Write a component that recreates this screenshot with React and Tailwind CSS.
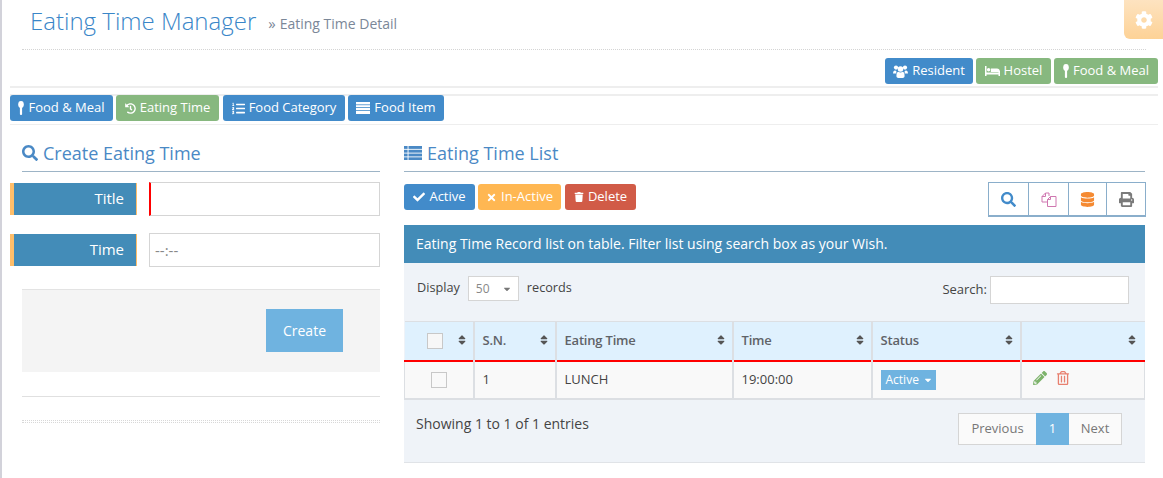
import { FaHistory, FaListOl, FaSearch, FaCheck, FaTimes, FaTrash, FaDatabase, FaPrint, FaPencilAlt, FaRegTrashAlt, FaCog, FaCaretDown, FaSort } from "react-icons/fa";

function Spoon() {
  return (
    <svg width="6" height="14" viewBox="0 0 6 14" fill="currentColor" className="shrink-0">
      <ellipse cx="3" cy="3.4" rx="2.8" ry="3.4" />
      <rect x="1.9" y="5" width="2.2" height="9" rx="1" />
    </svg>
  );
}

function Users() {
  return (
    <svg width="15" height="13" viewBox="0 0 15 13" fill="currentColor" className="shrink-0">
      <circle cx="3" cy="2.6" r="2.1" />
      <circle cx="12" cy="2.6" r="2.1" />
      <circle cx="7.5" cy="4" r="2.8" />
      <path d="M0 9c0-2.6.8-3.6 2-3.6.5 0 .9.3 1.4.5-.2.7-.1 1.6 0 2.6H0zM15 9c0-2.6-.8-3.6-2-3.6-.5 0-.9.3-1.4.5.2.7.1 1.6 0 2.6H15z" />
      <path d="M3.4 11c0-3 1-4.3 2-4.3.6.5 1.3.8 2.1.8s1.5-.3 2.1-.8c1 0 2 1.3 2 4.3 0 1.2-.8 2-2 2h-4.200c-1.200 0-2-.8-2-2z" />
    </svg>
  );
}

function Bed() {
  return (
    <svg width="15" height="10" viewBox="0 0 15 10" fill="currentColor" className="shrink-0">
      <rect x="0" y="0" width="1.500" height="10" />
      <rect x="13.500" y="5" width="1.500" height="5" />
      <rect x="0" y="6.500" width="15" height="2" />
      <circle cx="3.600" cy="3.800" r="1.700" />
      <path d="M5.800 2.500h6.200c1.500 0 3 1 3 3.500H5.800z" />
    </svg>
  );
}

function ListFour({ size = 18 }) {
  return (
    <svg width={size} height={size * 0.8} viewBox="0 0 20 16" fill="currentColor" className="shrink-0">
      {[0, 4.200, 8.400, 12.600].map((y) => (
        <g key={y}>
          <rect x="0" y={y} width="4" height="3.200" />
          <rect x="5" y={y} width="15" height="3.200" />
        </g>
      ))}
    </svg>
  );
}

function Stripes() {
  return (
    <svg width="14" height="12" viewBox="0 0 14 12" fill="currentColor" className="shrink-0">
      <rect width="14" height="2.400" />
      <rect y="3.200" width="14" height="2" />
      <rect y="6" width="14" height="2" />
      <rect y="8.800" width="14" height="3.200" />
    </svg>
  );
}

function Files() {
  return (
    <svg width="16" height="15" viewBox="0 0 16 15" fill="none" stroke="#cf77b0" strokeWidth="1" className="shrink-0">
      <path d="M4.500 1 1 4.500v5.500h5" />
      <path d="M4.500 1h3.500v3" />
      <path d="M4.500 1v3.500H1" />
      <path d="M9.500 4.500H15v10H6.500V7.500z" fill="white" />
      <path d="M9.500 4.500v3h-3" />
    </svg>
  );
}

function Btn({ color, icon, width, children }) {
  return (
    <span className={`flex h-[26px] items-center justify-center gap-[4px] rounded-[3px] text-[13px] text-white ${width} ${color}`}>
      {icon}
      {children}
    </span>
  );
}

function Field({ label, children }) {
  return (
    <div className="flex h-[34px] items-center">
      <div className="flex h-[32px] w-[127px] items-center justify-end border-l-4 border-r border-l-[#ffbe6a] border-r-[#ffbe6a] bg-[#438cb8] pb-[2px] pr-[12px] text-[15px] text-white">
        {label}
      </div>
      <div className="ml-[12px] flex-1">{children}</div>
    </div>
  );
}

function Th({ w, children }) {
  return (
    <th className={`h-[39px] border-r-2 border-[#dcdfe3] pl-[8px] pr-[5px] text-left text-[13px] font-semibold tracking-[-0.2px] text-[#5f6368] ${w}`}>
      <div className="flex items-center justify-between">
        <span>{children}</span>
        <FaSort className="mb-[2px] text-[12px] text-[#555]" />
      </div>
    </th>
  );
}

export default function App() {
  return (
    <div className="relative h-[478px] w-[1163px] overflow-hidden border-l-2 border-[#d2d2da] bg-white font-['Open_Sans',sans-serif]">
      <div className="absolute right-0 top-0 flex h-[39px] w-[39px] items-center justify-center rounded-bl-[6px] bg-gradient-to-b from-[#fde3c0] to-[#fdd296]">
        <FaCog className="text-[18px] text-white" />
      </div>

      <div className="ml-[20px] mr-[17px] flex h-[50px] items-center gap-[12px] border-b border-dotted border-[#d4d4d4] pb-[8px] pl-[8px]">
        <h1 className="text-[24px] font-light text-[#3a86c8]">Eating Time Manager</h1>
        <span className="mt-[6px] flex items-center gap-[4px] text-[14px] text-[#7b8798]">
          <span className="text-[15px] leading-none">»</span>
          Eating Time Detail
        </span>
      </div>

      <div className="ml-[8px] mr-[5px] flex h-[38px] items-start justify-end gap-[3px] border-b-2 border-[#eeeeee] pt-[8px]">
        <Btn color="bg-[#428bca]" width="w-[88px]" icon={<Users />}>Resident</Btn>
        <Btn color="bg-[#87b87f]" width="w-[75px]" icon={<Bed />}>Hostel</Btn>
        <Btn color="bg-[#87b87f]" width="w-[104px]" icon={<Spoon />}>Food &amp; Meal</Btn>
      </div>

      <div className="ml-[8px] mr-[5px] mt-[6px] flex h-[31px] gap-[3px] border-t-2 border-[#eeeeee] border-b border-b-[#eeeeee]">
        <div className="-mt-[1px] flex gap-[3px]">
          <Btn color="bg-[#428bca]" width="w-[103px]" icon={<Spoon />}>Food &amp; Meal</Btn>
          <Btn color="bg-[#87b87f]" width="w-[103px]" icon={<FaHistory className="text-[11px]" />}>Eating Time</Btn>
          <span className="flex gap-[3px] pl-[1px]">
            <Btn color="bg-[#428bca]" width="w-[122px]" icon={<FaListOl className="text-[13px]" />}>Food Category</Btn>
            <Btn color="bg-[#428bca]" width="w-[96px]" icon={<Stripes />}>Food Item</Btn>
          </span>
        </div>
      </div>

      <div className="flex">
        <div className="w-[378px] shrink-0">
          <h2 className="ml-[20px] flex h-[47px] items-center gap-[5px] border-b border-[#9db4c6] pt-[10px] text-[18px] text-[#4a89c5]">
            <FaSearch className="text-[16px]" />
            Create Eating Time
          </h2>
          <div className="ml-[8px] mt-[10px] flex flex-col gap-[17px]">
            <Field label="Title">
              <div className="h-[34px] border border-l-2 border-[#d5d5d5] border-l-[#ff0000] bg-white" />
            </Field>
            <Field label="Time">
              <div className="flex h-[34px] items-center border border-[#d5d5d5] bg-white pl-[5px] text-[15px] text-[#888]">
                --:--
              </div>
            </Field>
          </div>
          <div className="ml-[20px] mt-[22px] flex h-[83px] justify-end border-t border-[#e3e3e3] bg-[#f4f4f4] pr-[37px] pt-[19px]">
            <span className="flex h-[43px] w-[77px] items-center justify-center bg-[#6fb3e0] text-[14px] text-white">Create</span>
          </div>
          <div className="ml-[20px] mt-[24px] h-[24px] border-t border-[#e0e0e0]" />
          <div className="ml-[20px] h-[3px] border-y border-dotted border-[#d8d8d8]" />
        </div>

        <div className="ml-[24px] w-[741px] shrink-0">
          <h2 className="flex h-[47px] items-center gap-[5px] border-b border-[#9db4c6] pt-[10px] text-[18px] text-[#4a89c5]">
            <ListFour />
            Eating Time List
          </h2>
          <div className="mt-[12px] flex h-[35px] justify-between">
            <div className="flex">
              <Btn color="bg-[#428bca]" width="w-[71px] mr-[3px]" icon={<FaCheck className="text-[12px]" />}>Active</Btn>
              <Btn color="bg-[#ffb752]" width="w-[83px] mr-[4px]" icon={<FaTimes className="text-[11px]" />}>In-Active</Btn>
              <Btn color="bg-[#d15b47]" width="w-[71px]" icon={<FaTrash className="text-[10px]" />}>Delete</Btn>
            </div>
            <div className="-mr-[1px] -mt-[2px] flex h-[35px] border border-b-2 border-[#8aaecb]">
              <span className="flex w-[40px] items-center justify-center border-r border-[#8aaecb] text-[15px] text-[#428bca]"><FaSearch /></span>
              <span className="flex w-[40px] items-center justify-center border-r border-[#8aaecb]"><Files /></span>
              <span className="flex w-[38px] items-center justify-center border-r border-[#8aaecb] text-[15px] text-[#f58a32]"><FaDatabase /></span>
              <span className="flex w-[38px] items-center justify-center text-[15px] text-[#7a7a7a]"><FaPrint /></span>
            </div>
          </div>

          <div className="mt-[6px] flex h-[38px] items-center bg-[#438cb8] pb-[2px] pl-[12px] text-[14px] text-white">
            Eating Time Record list on table. Filter list using search box as your Wish.
          </div>

          <div className="h-[200px] border-b border-[#e0e3e7] bg-[#eff3f8]">
            <div className="flex h-[58px] items-start justify-between pl-[13px] pr-[16px] pt-[13px]">
              <div className="flex h-[25px] items-center text-[12.700px] text-[#444]">
                <span className="mb-[2px]">Display</span>
                <span className="ml-[8px] mr-[8px] flex h-[25px] w-[51px] items-center justify-between border border-[#d5d5d5] bg-white pl-[7px] pr-[6px] text-[12px] text-[#888]">
                  50
                  <FaCaretDown className="text-[10px] text-[#777]" />
                </span>
                <span className="mb-[2px]">records</span>
              </div>
              <div className="flex items-center gap-[3px] text-[13px] text-[#444]">
                Search:
                <span className="h-[28px] w-[139px] border border-[#d5d5d5] bg-white" />
              </div>
            </div>

            <table className="w-full table-fixed border-collapse">
              <thead>
                <tr className="border-t border-b-2 border-t-[#dcdfe3] border-b-[#ff0000] bg-[#dff1fe]">
                  <th className="h-[39px] w-[69px] border-r-2 border-[#dcdfe3] pl-[8px] pr-[5px]">
                    <div className="flex items-center justify-between pl-[14px]">
                      <span className="h-[16px] w-[16px] border border-[#c8c8c8] bg-[#f7f7f7]" />
                      <FaSort className="mb-[2px] text-[12px] text-[#555]" />
                    </div>
                  </th>
                  <Th w="w-[82px]">S.N.</Th>
                  <Th w="w-[177px]">Eating Time</Th>
                  <Th w="w-[139px]">Time</Th>
                  <Th w="w-[149px]">Status</Th>
                  <th className="h-[39px] pl-[8px] pr-[7px]">
                    <div className="flex justify-end">
                      <FaSort className="mb-[2px] text-[12px] text-[#555]" />
                    </div>
                  </th>
                </tr>
              </thead>
              <tbody>
                <tr className="h-[38px] border-b-2 border-[#dcdfe3] bg-[#f9f9f9] text-[13px] text-[#444]">
                  <td className="border-x border-r-2 border-[#dcdfe3]">
                    <span className="ml-[26px] block h-[16px] w-[16px] border border-[#c8c8c8] bg-[#f9f9f9]" />
                  </td>
                  <td className="border-r-2 border-[#dcdfe3] px-[8px]">1</td>
                  <td className="border-r-2 border-[#dcdfe3] px-[8px]">LUNCH</td>
                  <td className="border-r-2 border-[#dcdfe3] px-[8px]">19:00:00</td>
                  <td className="border-r-2 border-[#dcdfe3] px-[8px]">
                    <span className="flex h-[20px] w-[55px] items-center gap-[4px] bg-[#6fb3e0] pl-[5px] text-[12px] text-white">
                      Active
                      <FaCaretDown className="text-[10px]" />
                    </span>
                  </td>
                  <td className="border-r border-[#dcdfe3] pb-[4px] pl-[11px]">
                    <div className="flex items-center gap-[9px]">
                      <FaPencilAlt className="text-[14px] text-[#7db36b]" />
                      <FaRegTrashAlt className="text-[14px] text-[#e8806f]" />
                    </div>
                  </td>
                </tr>
              </tbody>
            </table>

            <div className="flex justify-between pl-[12px] pr-[23px] pt-[13px]">
              <span className="text-[14px] text-[#444]">Showing 1 to 1 of 1 entries</span>
              <div className="flex h-[32px] border border-[#d5d5d5] bg-[#fafafa] text-[13px] text-[#777]">
                <span className="flex w-[77px] items-center justify-center">Previous</span>
                <span className="-my-[1px] flex w-[33px] items-center justify-center bg-[#6fb3e0] text-white">1</span>
                <span className="flex w-[52px] items-center justify-center">Next</span>
              </div>
            </div>
          </div>
        </div>
      </div>
    </div>
  );
}
